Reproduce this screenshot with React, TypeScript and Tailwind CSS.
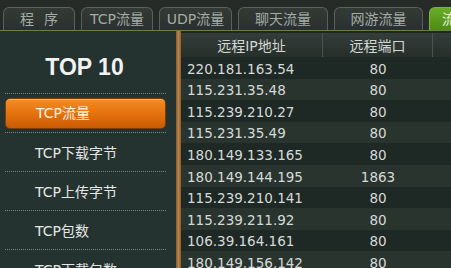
const tabs = [
  { label: "程序", w: "w-[72px]" },
  { label: "TCP流量", w: "w-[72px]" },
  { label: "UDP流量", w: "w-[73px]" },
  { label: "聊天流量", w: "w-[90px]" },
  { label: "网游流量", w: "w-[89px]" },
];

const menu = ["TCP流量", "TCP下载字节", "TCP上传字节", "TCP包数", "TCP下载包数"];

const rows = [
  ["220.181.163.54", "80"],
  ["115.231.35.48", "80"],
  ["115.239.210.27", "80"],
  ["115.231.35.49", "80"],
  ["180.149.133.165", "80"],
  ["180.149.144.195", "1863"],
  ["115.239.210.141", "80"],
  ["115.239.211.92", "80"],
  ["106.39.164.161", "80"],
  ["180.149.156.142", "80"],
];

const font = { fontFamily: '"DejaVu Sans", "Noto Sans CJK SC", sans-serif' };

function TabBar() {
  return (
    <div className="h-[31px] shrink-0 flex items-end gap-[6px] pl-[3px] bg-[#262b28] border-b border-[#6f7d48] overflow-hidden">
      {tabs.map((t, i) => (
        <div
          key={t.label}
          className={`${t.w} h-[23px] shrink-0 flex items-center justify-center rounded-t-[6px] border border-b-0 border-[#58615b] bg-gradient-to-b from-[#343b37] to-[#2a302c] text-[14px] text-[#a3aba5] whitespace-nowrap`}
        >
          {i === 0 ? (
            <span className="flex gap-[10px]">
              <span>程</span>
              <span>序</span>
            </span>
          ) : (
            t.label
          )}
        </div>
      ))}
      <div className="w-[60px] h-[23px] shrink-0 flex items-center pl-[12px] rounded-t-[6px] border border-b-0 border-[#7cb43a] bg-gradient-to-b from-[#6aac26] to-[#4c8c14] text-[14px] text-[#e8f4d8] whitespace-nowrap overflow-hidden">
        流量
      </div>
    </div>
  );
}

function SidePanel() {
  return (
    <div className="w-[176px] shrink-0 bg-[#243230] pl-[5px] pr-[10px]">
      <div
        className="h-[62px] pt-[25px] text-center leading-none text-[23px] font-bold text-[#f2f2f2] pr-[2px]"
        style={{ fontFamily: '"Liberation Sans", sans-serif' }}
      >
        TOP 10
      </div>
      {menu.map((m, i) => (
        <div key={m} className="h-[39px] border-t border-dotted border-[#7b817c]">
          {i === 0 ? (
            <div className="mt-[4px] h-[31px] flex items-center pl-[30px] rounded-[5px] border border-[#7a3f08] bg-gradient-to-b from-[#f38d25] via-[#e5720e] to-[#c95b05] text-[14px] text-[#fff1e0] shadow-[inset_0_1px_0_rgba(255,210,150,0.5)] whitespace-nowrap">
              {m}
            </div>
          ) : (
            <div className="h-[38px] flex items-center pl-[30px] pt-[2px] text-[14px] text-[#e4e7e4] whitespace-nowrap">
              {m}
            </div>
          )}
        </div>
      ))}
    </div>
  );
}

function Table() {
  return (
    <div className="flex-1 min-w-0 bg-[#1f2724] pt-[2px]">
      <div className="h-[24px] flex bg-gradient-to-b from-[#343d39] to-[#272f2b] text-[14px] text-[#d4d8d5]">
        <div className="w-[142px] shrink-0 flex items-center justify-center pt-[2px] border-r border-[#4b5450]">
          远程IP地址
        </div>
        <div className="w-[110px] shrink-0 flex items-center justify-center pt-[2px] border-r border-[#4b5450]">
          远程端口
        </div>
        <div className="flex-1" />
      </div>
      {rows.map((r, i) => (
        <div
          key={r[0]}
          className={`h-[21.6px] flex items-center pt-[2px] text-[13.5px] text-[#d6dad7] ${i % 2 === 0 ? "bg-[#1e2825]" : "bg-[#29342f]"}`}
        >
          <div className="w-[142px] shrink-0 pl-[6px]">{r[0]}</div>
          <div className="w-[110px] shrink-0 text-center">{r[1]}</div>
          <div className="flex-1" />
        </div>
      ))}
    </div>
  );
}

export default function App() {
  return (
    <div className="w-[451px] h-[268px] overflow-hidden flex flex-col bg-[#262b28]" style={font}>
      <TabBar />
      <div className="flex flex-1 min-h-0">
        <SidePanel />
        <div className="w-[5px] shrink-0 bg-gradient-to-r from-[#8a5a2c] via-[#b8844a] to-[#8a5a2c]" />
        <Table />
      </div>
    </div>
  );
}
